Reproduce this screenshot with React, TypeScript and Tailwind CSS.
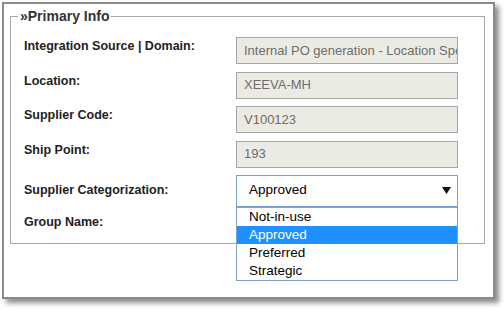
const FIELDS = [
  { label: "Integration Source | Domain:", value: "Internal PO generation - Location Specific" },
  { label: "Location:", value: "XEEVA-MH" },
  { label: "Supplier Code:", value: "V100123" },
  { label: "Ship Point:", value: "193" },
];

const OPTIONS = ["Not-in-use", "Approved", "Preferred", "Strategic"];

function ReadOnlyRow({ label, value, first }: { label: string; value: string; first: boolean }) {
  return (
    <div className={`flex items-start ${first ? "" : "mt-[7.5px]"}`}>
      <div className="w-[212px] pt-[2px] text-[12.5px] leading-[15px] font-bold text-[#222]">{label}</div>
      <div className="w-[222px] h-[27px] flex items-center overflow-hidden whitespace-nowrap border border-[#a6a6a6] bg-[#ebebe4] pl-[7px] text-[13px] text-[#6d6d6d]">
        {value}
      </div>
    </div>
  );
}

export default function App() {
  const selected = "Approved";
  return (
    <div className="w-[504px] h-[310px] bg-white" style={{ fontFamily: '"Liberation Sans", Arial, sans-serif' }}>
      <div className="ml-[2px] mt-[2px] w-[493px] h-[297px] border-2 border-[#8a8a8a] bg-white shadow-[4px_4px_5px_rgba(0,0,0,0.45)] pt-[4px] pl-[6px] pr-[8px]">
        <fieldset className="border border-[#a8a8a8] pl-[13px] pt-[13px] pb-[13px] min-w-0">
          <legend className="-ml-[6px] px-[2px] text-[14px] leading-[16px] font-bold text-[#333]">»Primary Info</legend>

          {FIELDS.map((f, i) => (
            <ReadOnlyRow key={f.label} label={f.label} value={f.value} first={i === 0} />
          ))}

          <div className="mt-[7px] flex items-center">
            <div className="w-[212px] text-[12.5px] leading-[15px] font-bold text-[#222]">Supplier Categorization:</div>
            <div className="relative">
              <div className="w-[222px] h-[32px] flex items-center justify-between border border-[#7aa0d8] bg-white pl-[12px] pr-[6px] text-[13.5px] text-black">
                <span>{selected}</span>
                <svg width="9" height="7" viewBox="0 0 9 7">
                  <polygon points="0,0 9,0 4.5,7" fill="#111" />
                </svg>
              </div>
              <ul className="absolute left-0 top-[32px] z-10 w-[222px] border border-[#7f9fcf] bg-white">
                {OPTIONS.map((o) => (
                  <li
                    key={o}
                    className={`h-[18px] pl-[12px] text-[13.5px] leading-[18px] ${
                      o === selected ? "bg-[#1e90ff] text-white" : "text-black"
                    }`}
                  >
                    {o}
                  </li>
                ))}
              </ul>
            </div>
          </div>

          <div className="mt-[8px] text-[12.5px] leading-[15px] font-bold text-[#222]">Group Name:</div>
        </fieldset>
      </div>
    </div>
  );
}
